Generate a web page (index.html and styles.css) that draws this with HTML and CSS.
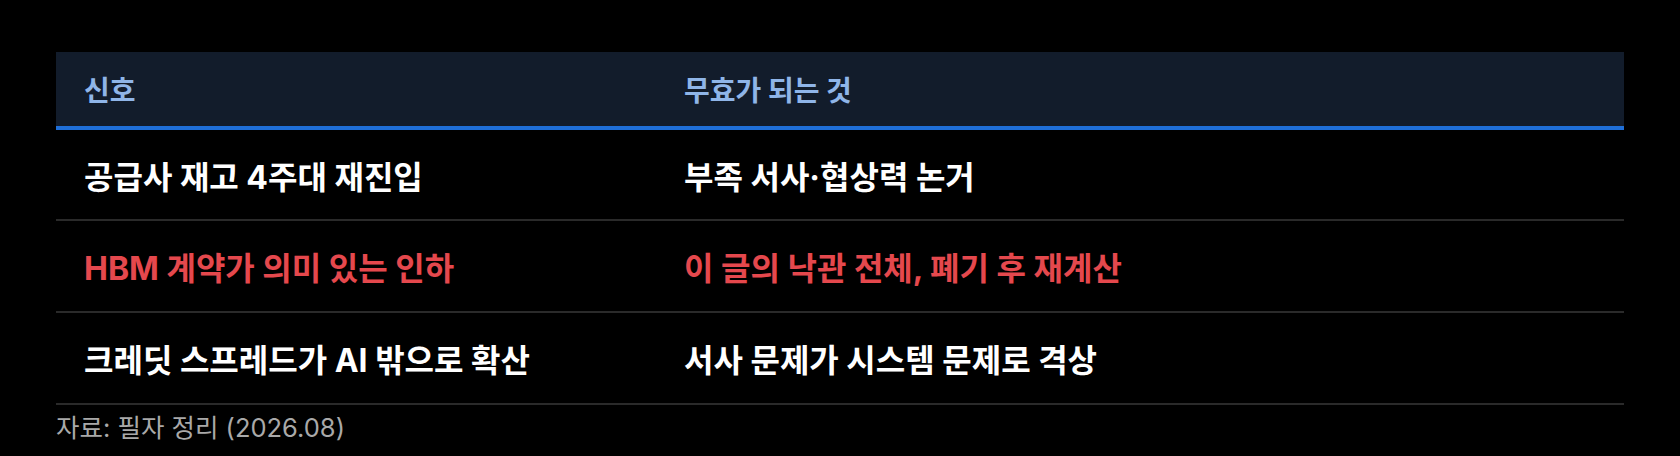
FILE: index.html
```html
<!DOCTYPE html>
<html lang="ko">
<head>
<meta charset="utf-8">
<title>신호 표</title>
<link rel="stylesheet" href="styles.css">
</head>
<body>
<figure class="wrap">
  <table class="sig">
    <thead>
      <tr>
        <th class="c1">신호</th>
        <th>무효가 되는 것</th>
      </tr>
    </thead>
    <tbody>
      <tr>
        <td>공급사 재고 4주대 재진입</td>
        <td>부족 서사·협상력 논거</td>
      </tr>
      <tr class="alert">
        <td>HBM 계약가 의미 있는 인하</td>
        <td>이 글의 낙관 전체, 폐기 후 재계산</td>
      </tr>
      <tr>
        <td>크레딧 스프레드가 AI 밖으로 확산</td>
        <td>서사 문제가 시스템 문제로 격상</td>
      </tr>
    </tbody>
  </table>
  <figcaption class="cap">자료: 필자 정리 (2026.08)</figcaption>
</figure>
</body>
</html>
```

FILE: styles.css
```css
html, body {
  margin: 0;
  padding: 0;
  background: #000;
}
body {
  font-family: Inter, "Noto Sans CJK KR", sans-serif;
  color: #fff;
}
.wrap {
  margin: 52px 56px 0 56px;
  padding: 0;
}
.sig {
  width: 1568px;
  border-collapse: collapse;
  table-layout: fixed;
}
.sig th {
  background: #121c2b;
  color: #8fb5e8;
  font-size: 28px;
  font-weight: 700;
  text-align: left;
  height: 76px;
  padding: 0 28px;
  border-bottom: 4px solid #1f6fd8;
  box-sizing: border-box;
}
.sig th.c1 {
  width: 600px;
}
.sig td {
  font-size: 32px;
  font-weight: 700;
  height: 92px;
  padding: 0 28px;
  border-bottom: 2px solid #2a2a2a;
  box-sizing: border-box;
  vertical-align: middle;
}
.alert td {
  color: #e5484d;
}
.cap {
  margin: 4px 0 0 0;
  font-size: 25.5px;
  line-height: 38px;
  color: #a9a9a9;
}
```
